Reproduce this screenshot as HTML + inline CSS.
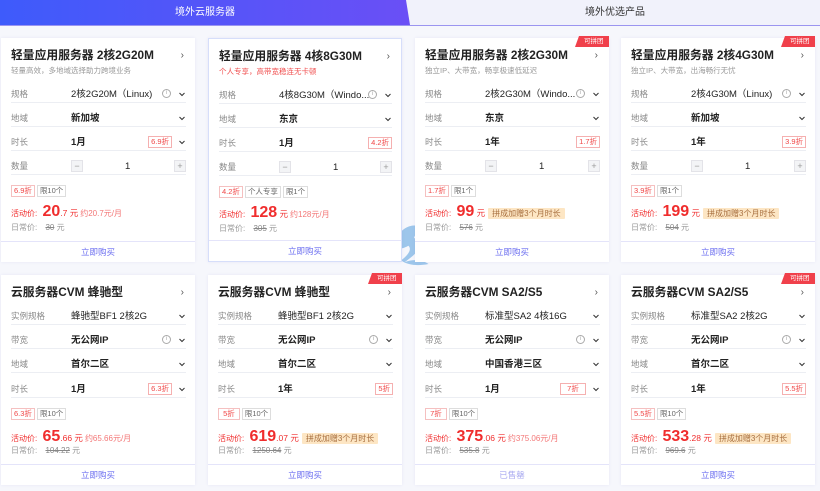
<!DOCTYPE html>
<html><head><meta charset="utf-8"><style>
*{margin:0;padding:0;box-sizing:border-box}
body{width:820px;height:491px;overflow:hidden;background:#f6f7fc;font-family:"Liberation Sans","Noto Sans CJK SC",sans-serif;position:relative;color:#222}
.tabbar{position:absolute;left:0;top:0;width:820px;height:26px;background:#f1f2fb;border-bottom:1.5px solid #9b95f0}
.tab1{position:absolute;left:0;top:0;width:410px;height:25px;background:linear-gradient(90deg,#3e5bfb,#6a4ff6);clip-path:polygon(0 0,406px 0,410px 25px,0 25px);color:#fff;font-size:10px;text-align:center;line-height:25px}
.tab2{position:absolute;left:410px;top:0;width:410px;height:25px;font-size:10px;text-align:center;line-height:25px;color:#333}
.card{position:absolute;width:194px;background:#fff;box-shadow:0 0 3px rgba(120,120,200,.12)}
.card.sel{border:1px solid #d6defa}
.t{position:absolute;left:10px;font-size:11.8px;font-weight:bold;line-height:16px;white-space:nowrap}
.arr{position:absolute;right:11px;font-size:10px;color:#555;line-height:10px}
.sub{position:absolute;left:10px;font-size:7.5px;color:#999;line-height:10px}
.sub.r{color:#f05050}
.row{position:absolute;left:10px;right:9px;height:24px;border-bottom:1px solid #eceef3}
.row .l{position:absolute;left:0;top:9px;font-size:8.5px;color:#888;line-height:12px}
.row .v{position:absolute;left:60px;top:10px;font-size:9.5px;font-weight:bold;color:#222;white-space:nowrap;line-height:12px}
.row .v.n{font-weight:normal}
.row .c{position:absolute;right:0;top:11px;width:8px;height:8px}
.row .i{position:absolute;right:15px;top:10px;width:9px;height:9px;border:1px solid #aaa;border-radius:50%;font-size:6px;color:#aaa;text-align:center;line-height:7px}
.row .d{position:absolute;top:9px;font-size:7.5px;color:#f04646;border:1px solid #f5b0b0;padding:0 2px;line-height:10px}
.pm{position:absolute;top:9px;width:12px;height:12px;background:#f3f4f6;border:1px solid #e3e3e8;font-size:9px;color:#999;text-align:center;line-height:10px}
.tags{position:absolute;left:10px;font-size:7.5px;line-height:10px;white-space:nowrap}
.tags span{display:inline-block;border:1px solid #ddd;color:#666;padding:0 2px;margin-right:2px}
.tags span.r{border-color:#f5c0c0;color:#f04646}
.price{position:absolute;left:10px;white-space:nowrap;color:#f02d2d;font-size:8px;line-height:20px}
.price b{font-size:16px;font-weight:bold;margin-left:3px}
.price .y{font-size:8.5px}
.price .m{color:#f37777;font-size:8px;margin-left:2px}
.price .g{background:#fde6c4;color:#a87040;font-size:8px;padding:1px 4px;margin-left:3px;border-radius:1px}
.reg{position:absolute;left:10px;font-size:8px;color:#999;white-space:nowrap}
.reg s{color:#888;margin-left:6px}
.btn{position:absolute;left:0;right:0;bottom:0;border-top:1.5px solid #e4e4fa;text-align:center;font-size:8.5px;color:#6b6ef0;line-height:20px}
.btn.gray{color:#a9aaf0}
.pt{position:absolute;right:0;top:-2px;height:11px;width:34px;background:#f0404b;clip-path:polygon(4px 0,100% 0,100% 100%,0 100%);color:#fff;font-size:6.5px;line-height:11px;padding-left:9px}
</style></head><body>
<div class="tabbar"><div class="tab1">境外云服务器</div><div class="tab2">境外优选产品</div></div>

<svg style="position:absolute;left:392px;top:220px" width="42" height="46" viewBox="0 0 46 50"><path d="M8 30 C2 20 10 8 22 6 C32 5 40 8 42 12 C34 9 26 12 24 20 C28 18 34 20 32 26 C30 34 22 40 14 46 C24 42 34 44 40 48 C30 50 18 50 10 44 C18 38 22 32 18 28 C14 30 10 32 8 30Z" fill="#7fb6e6" opacity=".75"/></svg>

<!-- Row 1 -->
<div class="card" style="left:1px;top:38px;height:224px">
<div class="t" style="top:9px">轻量应用服务器 2核2G20M</div><div class="arr" style="top:13px">›</div>
<div class="sub" style="top:28px">轻量高效，多地域选择助力跨境业务</div>
<div class="row" style="top:41px"><span class="l">规格</span><span class="v n">2核2G20M（Linux)</span><span class="i">i</span><svg class="c" viewBox="0 0 8 8"><path d="M1.5 3l2.5 2.5L6.5 3" stroke="#333" fill="none"/></svg></div>
<div class="row" style="top:65px"><span class="l">地域</span><span class="v">新加坡</span><svg class="c" viewBox="0 0 8 8"><path d="M1.5 3l2.5 2.5L6.5 3" stroke="#333" fill="none"/></svg></div>
<div class="row" style="top:89px"><span class="l">时长</span><span class="v">1月</span><span class="d" style="right:14px">6.9折</span><svg class="c" viewBox="0 0 8 8"><path d="M1.5 3l2.5 2.5L6.5 3" stroke="#333" fill="none"/></svg></div>
<div class="row" style="top:113px"><span class="l">数量</span><span class="pm" style="left:60px">−</span><span class="v n" style="left:114px">1</span><span class="pm" style="right:0">+</span></div>
<div class="tags" style="top:147px"><span class="r">6.9折</span><span>限10个</span></div>
<div class="price" style="top:164px">活动价: <b>20</b><span class="y">.7 元</span><span class="m">约20.7元/月</span></div>
<div class="reg" style="top:184px">日常价: <s>30</s> 元</div>
<div class="btn">立即购买</div></div>

<div class="card sel" style="left:208px;top:38px;height:224px">
<div class="t" style="top:9px">轻量应用服务器 4核8G30M</div><div class="arr" style="top:13px">›</div>
<div class="sub r" style="top:28px">个人专享，高带宽稳连无卡顿</div>
<div class="row" style="top:41px"><span class="l">规格</span><span class="v n">4核8G30M（Windo...</span><span class="i">i</span><svg class="c" viewBox="0 0 8 8"><path d="M1.5 3l2.5 2.5L6.5 3" stroke="#333" fill="none"/></svg></div>
<div class="row" style="top:65px"><span class="l">地域</span><span class="v">东京</span><svg class="c" viewBox="0 0 8 8"><path d="M1.5 3l2.5 2.5L6.5 3" stroke="#333" fill="none"/></svg></div>
<div class="row" style="top:89px"><span class="l">时长</span><span class="v">1月</span><span class="d" style="right:0">4.2折</span></div>
<div class="row" style="top:113px"><span class="l">数量</span><span class="pm" style="left:60px">−</span><span class="v n" style="left:114px">1</span><span class="pm" style="right:0">+</span></div>
<div class="tags" style="top:147px"><span class="r">4.2折</span><span>个人专享</span><span>限1个</span></div>
<div class="price" style="top:164px">活动价: <b>128</b><span class="y"> 元</span><span class="m">约128元/月</span></div>
<div class="reg" style="top:184px">日常价: <s>305</s> 元</div>
<div class="btn">立即购买</div></div>

<div class="card" style="left:415px;top:38px;height:224px"><div class="pt">可拼团</div>
<div class="t" style="top:9px">轻量应用服务器 2核2G30M</div><div class="arr" style="top:13px">›</div>
<div class="sub" style="top:28px">独立IP、大带宽，畅享极速低延迟</div>
<div class="row" style="top:41px"><span class="l">规格</span><span class="v n">2核2G30M（Windo...</span><span class="i">i</span><svg class="c" viewBox="0 0 8 8"><path d="M1.5 3l2.5 2.5L6.5 3" stroke="#333" fill="none"/></svg></div>
<div class="row" style="top:65px"><span class="l">地域</span><span class="v">东京</span><svg class="c" viewBox="0 0 8 8"><path d="M1.5 3l2.5 2.5L6.5 3" stroke="#333" fill="none"/></svg></div>
<div class="row" style="top:89px"><span class="l">时长</span><span class="v">1年</span><span class="d" style="right:0">1.7折</span></div>
<div class="row" style="top:113px"><span class="l">数量</span><span class="pm" style="left:60px">−</span><span class="v n" style="left:114px">1</span><span class="pm" style="right:0">+</span></div>
<div class="tags" style="top:147px"><span class="r">1.7折</span><span>限1个</span></div>
<div class="price" style="top:164px">活动价: <b>99</b><span class="y"> 元</span><span class="g">拼成加赠3个月时长</span></div>
<div class="reg" style="top:184px">日常价: <s>576</s> 元</div>
<div class="btn">立即购买</div></div>

<div class="card" style="left:621px;top:38px;height:224px"><div class="pt">可拼团</div>
<div class="t" style="top:9px">轻量应用服务器 2核4G30M</div><div class="arr" style="top:13px">›</div>
<div class="sub" style="top:28px">独立IP、大带宽，出海畅行无忧</div>
<div class="row" style="top:41px"><span class="l">规格</span><span class="v n">2核4G30M（Linux)</span><span class="i">i</span><svg class="c" viewBox="0 0 8 8"><path d="M1.5 3l2.5 2.5L6.5 3" stroke="#333" fill="none"/></svg></div>
<div class="row" style="top:65px"><span class="l">地域</span><span class="v">新加坡</span><svg class="c" viewBox="0 0 8 8"><path d="M1.5 3l2.5 2.5L6.5 3" stroke="#333" fill="none"/></svg></div>
<div class="row" style="top:89px"><span class="l">时长</span><span class="v">1年</span><span class="d" style="right:0">3.9折</span></div>
<div class="row" style="top:113px"><span class="l">数量</span><span class="pm" style="left:60px">−</span><span class="v n" style="left:114px">1</span><span class="pm" style="right:0">+</span></div>
<div class="tags" style="top:147px"><span class="r">3.9折</span><span>限1个</span></div>
<div class="price" style="top:164px">活动价: <b>199</b><span class="y"> 元</span><span class="g">拼成加赠3个月时长</span></div>
<div class="reg" style="top:184px">日常价: <s>504</s> 元</div>
<div class="btn">立即购买</div></div>

<!-- Row 2 -->
<div class="card" style="left:1px;top:275px;height:210px">
<div class="t" style="top:9px">云服务器CVM 蜂驰型</div><div class="arr" style="top:13px">›</div>
<div class="row" style="top:26px"><span class="l">实例规格</span><span class="v n">蜂驰型BF1 2核2G</span><svg class="c" viewBox="0 0 8 8"><path d="M1.5 3l2.5 2.5L6.5 3" stroke="#333" fill="none"/></svg></div>
<div class="row" style="top:50px"><span class="l">带宽</span><span class="v">无公网IP</span><span class="i">i</span><svg class="c" viewBox="0 0 8 8"><path d="M1.5 3l2.5 2.5L6.5 3" stroke="#333" fill="none"/></svg></div>
<div class="row" style="top:74px"><span class="l">地域</span><span class="v">首尔二区</span><svg class="c" viewBox="0 0 8 8"><path d="M1.5 3l2.5 2.5L6.5 3" stroke="#333" fill="none"/></svg></div>
<div class="row" style="top:99px"><span class="l">时长</span><span class="v">1月</span><span class="d" style="right:14px">6.3折</span><svg class="c" viewBox="0 0 8 8"><path d="M1.5 3l2.5 2.5L6.5 3" stroke="#333" fill="none"/></svg></div>
<div class="tags" style="top:133px"><span class="r">6.3折</span><span>限10个</span></div>
<div class="price" style="top:152px">活动价: <b>65</b><span class="y">.66 元</span><span class="m">约65.66元/月</span></div>
<div class="reg" style="top:170px">日常价: <s>104.22</s> 元</div>
<div class="btn">立即购买</div></div>

<div class="card" style="left:208px;top:275px;height:210px"><div class="pt">可拼团</div>
<div class="t" style="top:9px">云服务器CVM 蜂驰型</div><div class="arr" style="top:13px">›</div>
<div class="row" style="top:26px"><span class="l">实例规格</span><span class="v n">蜂驰型BF1 2核2G</span><svg class="c" viewBox="0 0 8 8"><path d="M1.5 3l2.5 2.5L6.5 3" stroke="#333" fill="none"/></svg></div>
<div class="row" style="top:50px"><span class="l">带宽</span><span class="v">无公网IP</span><span class="i">i</span><svg class="c" viewBox="0 0 8 8"><path d="M1.5 3l2.5 2.5L6.5 3" stroke="#333" fill="none"/></svg></div>
<div class="row" style="top:74px"><span class="l">地域</span><span class="v">首尔二区</span><svg class="c" viewBox="0 0 8 8"><path d="M1.5 3l2.5 2.5L6.5 3" stroke="#333" fill="none"/></svg></div>
<div class="row" style="top:99px"><span class="l">时长</span><span class="v">1年</span><span class="d" style="right:0">5折</span></div>
<div class="tags" style="top:133px"><span class="r">&nbsp;5折&nbsp;</span><span>限10个</span></div>
<div class="price" style="top:152px">活动价: <b>619</b><span class="y">.07 元</span><span class="g">拼成加赠3个月时长</span></div>
<div class="reg" style="top:170px">日常价: <s>1250.64</s> 元</div>
<div class="btn">立即购买</div></div>

<div class="card" style="left:415px;top:275px;height:210px">
<div class="t" style="top:9px">云服务器CVM SA2/S5</div><div class="arr" style="top:13px">›</div>
<div class="row" style="top:26px"><span class="l">实例规格</span><span class="v n">标准型SA2 4核16G</span><svg class="c" viewBox="0 0 8 8"><path d="M1.5 3l2.5 2.5L6.5 3" stroke="#333" fill="none"/></svg></div>
<div class="row" style="top:50px"><span class="l">带宽</span><span class="v">无公网IP</span><span class="i">i</span><svg class="c" viewBox="0 0 8 8"><path d="M1.5 3l2.5 2.5L6.5 3" stroke="#333" fill="none"/></svg></div>
<div class="row" style="top:74px"><span class="l">地域</span><span class="v">中国香港三区</span><svg class="c" viewBox="0 0 8 8"><path d="M1.5 3l2.5 2.5L6.5 3" stroke="#333" fill="none"/></svg></div>
<div class="row" style="top:99px"><span class="l">时长</span><span class="v">1月</span><span class="d" style="right:14px">&nbsp;&nbsp;7折&nbsp;&nbsp;</span><svg class="c" viewBox="0 0 8 8"><path d="M1.5 3l2.5 2.5L6.5 3" stroke="#333" fill="none"/></svg></div>
<div class="tags" style="top:133px"><span class="r">&nbsp;7折&nbsp;</span><span>限10个</span></div>
<div class="price" style="top:152px">活动价: <b>375</b><span class="y">.06 元</span><span class="m">约375.06元/月</span></div>
<div class="reg" style="top:170px">日常价: <s>535.8</s> 元</div>
<div class="btn gray">已售罄</div></div>

<div class="card" style="left:621px;top:275px;height:210px"><div class="pt">可拼团</div>
<div class="t" style="top:9px">云服务器CVM SA2/S5</div><div class="arr" style="top:13px">›</div>
<div class="row" style="top:26px"><span class="l">实例规格</span><span class="v n">标准型SA2 2核2G</span><svg class="c" viewBox="0 0 8 8"><path d="M1.5 3l2.5 2.5L6.5 3" stroke="#333" fill="none"/></svg></div>
<div class="row" style="top:50px"><span class="l">带宽</span><span class="v">无公网IP</span><span class="i">i</span><svg class="c" viewBox="0 0 8 8"><path d="M1.5 3l2.5 2.5L6.5 3" stroke="#333" fill="none"/></svg></div>
<div class="row" style="top:74px"><span class="l">地域</span><span class="v">首尔二区</span><svg class="c" viewBox="0 0 8 8"><path d="M1.5 3l2.5 2.5L6.5 3" stroke="#333" fill="none"/></svg></div>
<div class="row" style="top:99px"><span class="l">时长</span><span class="v">1年</span><span class="d" style="right:0">5.5折</span></div>
<div class="tags" style="top:133px"><span class="r">5.5折</span><span>限10个</span></div>
<div class="price" style="top:152px">活动价: <b>533</b><span class="y">.28 元</span><span class="g">拼成加赠3个月时长</span></div>
<div class="reg" style="top:170px">日常价: <s>969.6</s> 元</div>
<div class="btn">立即购买</div></div>
</body></html>
